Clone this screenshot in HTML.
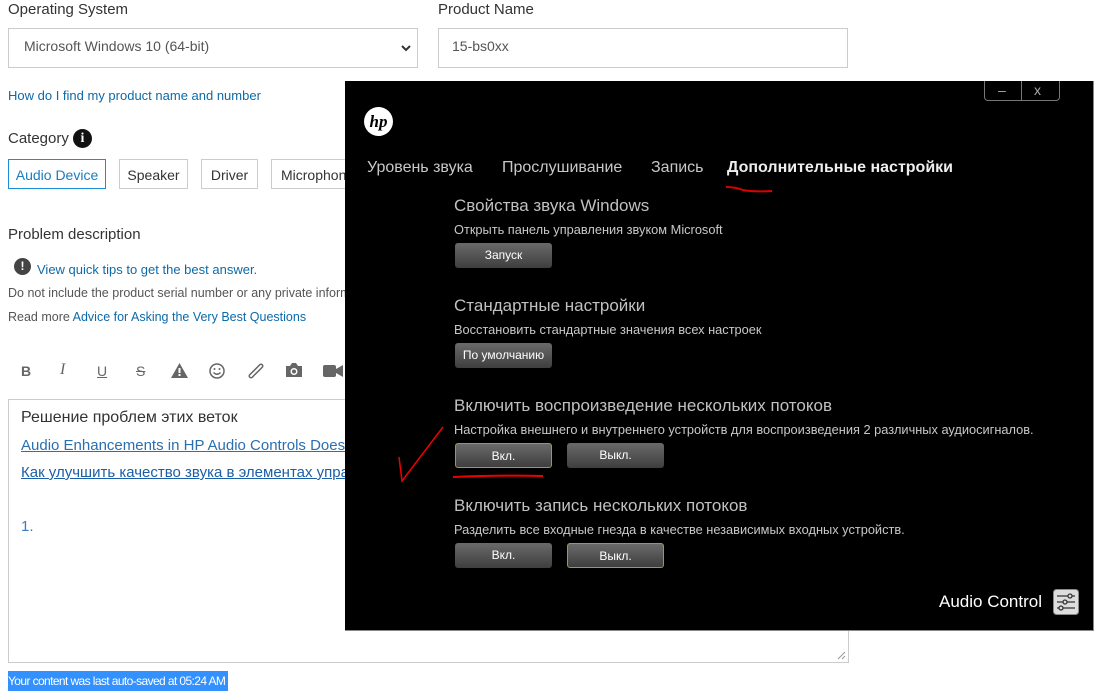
<!DOCTYPE html>
<html><head><meta charset="utf-8"><style>
body{margin:0;width:1103px;height:698px;background:#fff;position:relative;overflow:hidden;font-family:"Liberation Sans",sans-serif;}
.a{position:absolute;white-space:nowrap;}
.lbl{font-size:15px;color:#333;}
.box{position:absolute;border:1px solid #ccc;background:#fff;}
.chip{position:absolute;top:159px;height:30px;border:1px solid #ccc;font-size:14px;color:#333;line-height:30px;text-align:center;box-sizing:border-box;}
.link{color:#0c6aa8;}
.sm{font-size:12.5px;color:#555;}
.tb{position:absolute;top:363px;font-size:14px;color:#666;}
#win{position:absolute;left:345px;top:81px;width:748px;height:549px;background:#000;border-right:1px solid #888;border-bottom:1px solid #888;}
.w{position:absolute;white-space:nowrap;color:#c8c8c8;}
.h{font-size:17px;color:#c0c0c0;}
.d{font-size:12.8px;color:#c8c8c8;}
.btn{position:absolute;width:97px;height:25px;border-radius:3px;background:linear-gradient(#6a6a6a,#3e3e3e);color:#fff;font-size:12px;text-align:center;line-height:25px;box-sizing:border-box;}
.sel{border:1px solid #a09a3a;}
</style></head><body>
<div class="a lbl" style="left:8px;top:1px;">Operating System</div>
<div class="a lbl" style="left:438px;top:1px;">Product Name</div>
<div class="box" style="left:8px;top:28px;width:408px;height:38px;"></div>
<div class="a" style="left:24px;top:38px;font-size:14px;color:#555;">Microsoft Windows 10 (64-bit)</div>
<svg class="a" style="left:401px;top:44px" width="10" height="8"><path d="M1 2 L5 6 L9 2" stroke="#333" stroke-width="2" fill="none"/></svg>
<div class="box" style="left:438px;top:28px;width:408px;height:38px;"></div>
<div class="a" style="left:452px;top:38px;font-size:14px;color:#555;">15-bs0xx</div>
<div class="a link" style="left:8px;top:88px;font-size:13px;">How do I find my product name and number</div>
<div class="a lbl" style="left:8px;top:130px;">Category</div>
<div class="a" style="left:73px;top:129px;width:19px;height:19px;border-radius:50%;background:#111;color:#fff;font:bold 14px 'Liberation Serif',serif;text-align:center;line-height:19px;">i</div>
<div class="chip" style="left:8px;width:98px;border:1px solid #1a8fd8;color:#1a7cc0;">Audio Device</div>
<div class="chip" style="left:119px;width:69px;">Speaker</div>
<div class="chip" style="left:201px;width:57px;">Driver</div>
<div class="chip" style="left:271px;width:80px;text-align:left;padding-left:9px;">Microphone</div>
<div class="a lbl" style="left:8px;top:226px;">Problem description</div>
<div class="a" style="left:14px;top:258px;width:17px;height:17px;border-radius:50%;background:#444;color:#fff;font:bold 12px sans-serif;text-align:center;line-height:17px;">!</div>
<div class="a link" style="left:37px;top:262px;font-size:13px;">View quick tips to get the best answer.</div>
<div class="a sm" style="left:8px;top:286px;">Do not include the product serial number or any private information</div>
<div class="a sm" style="left:8px;top:310px;">Read more <span class="link">Advice for Asking the Very Best Questions</span></div>
<div class="tb" style="left:21px;font-weight:bold;">B</div>
<div class="tb" style="left:60px;font-style:italic;font-family:'Liberation Serif';font-size:16px;top:361px">I</div>
<div class="tb" style="left:97px;text-decoration:underline;">U</div>
<div class="tb" style="left:136px;text-decoration:line-through;">S</div>
<svg class="a" style="left:171px;top:363px" width="17" height="15"><path d="M8.5 0 L17 15 H0Z" fill="#666"/><rect x="7.5" y="5" width="2" height="5" fill="#fff"/><rect x="7.5" y="11" width="2" height="2" fill="#fff"/></svg>
<svg class="a" style="left:209px;top:363px" width="16" height="16"><circle cx="8" cy="8" r="7" stroke="#666" stroke-width="1.5" fill="none"/><circle cx="5.5" cy="6" r="1" fill="#666"/><circle cx="10.5" cy="6" r="1" fill="#666"/><path d="M4.5 9.5 Q8 13 11.5 9.5" stroke="#666" fill="none" stroke-width="1.3"/></svg>
<svg class="a" style="left:248px;top:363px" width="16" height="16"><path d="M3 13 L13 3" stroke="#666" stroke-width="5" stroke-linecap="round"/><path d="M3 13 L13 3" stroke="#fff" stroke-width="2" stroke-linecap="round"/></svg>
<svg class="a" style="left:285px;top:362px" width="18" height="16"><path d="M1 4 H5 L7 1 H11 L13 4 H17 V15 H1Z" fill="#666"/><circle cx="9" cy="9.5" r="3.5" fill="#fff"/><circle cx="9" cy="9.5" r="2" fill="#666"/></svg>
<svg class="a" style="left:323px;top:364px" width="20" height="14"><rect x="0" y="1" width="13" height="12" rx="2" fill="#666"/><path d="M13 5 L20 1 V13 L13 9Z" fill="#666"/></svg>
<div class="box" style="left:8px;top:399px;width:839px;height:262px;border-color:#ccc;"></div>
<svg class="a" style="left:836px;top:650px" width="10" height="10"><path d="M9 2 L2 9 M9 6 L6 9" stroke="#999"/></svg>
<div class="a" style="left:21px;top:409px;font-size:16px;color:#333;">Решение проблем этих веток</div>
<div class="a link" style="left:21px;top:437px;font-size:15px;text-decoration:underline;color:#2a6fb0;">Audio Enhancements in HP Audio Controls Does not work</div>
<div class="a link" style="left:21px;top:464px;font-size:15px;text-decoration:underline;color:#1a5fa8;">Как улучшить качество звука в элементах управления</div>
<div class="a" style="left:21px;top:518px;font-size:15px;color:#3a7cc0;">1.</div>
<div class="a" style="left:8px;top:671px;width:220px;height:20px;background:#3390ff;color:#fff;font-size:12px;line-height:20px;letter-spacing:-0.6px;">Your content was last auto-saved at 05:24 AM</div>

<div id="win">
 <div style="position:absolute;left:639px;top:0;width:74px;height:19px;border:1px solid #777;border-top:none;border-radius:0 0 4px 4px;"></div>
 <div style="position:absolute;left:676px;top:0;width:1px;height:19px;background:#777;"></div>
 <div class="w" style="left:653px;top:1px;color:#aaa;font-size:14px;">–</div>
 <div class="w" style="left:689px;top:1px;color:#aaa;font-size:14px;">x</div>
 <svg style="position:absolute;left:19px;top:26px" width="29" height="29"><circle cx="14.5" cy="14.5" r="14.5" fill="#fff"/><text x="14.5" y="20" font-family="Liberation Serif" font-style="italic" font-weight="bold" font-size="17" fill="#000" text-anchor="middle">hp</text></svg>
 <div class="w" style="left:22px;top:78px;font-size:16px;">Уровень звука</div>
 <div class="w" style="left:157px;top:78px;font-size:16px;">Прослушивание</div>
 <div class="w" style="left:306px;top:78px;font-size:16px;">Запись</div>
 <div class="w" style="left:382px;top:78px;font-size:16px;font-weight:bold;color:#eee;">Дополнительные настройки</div>
 <svg style="position:absolute;left:380px;top:102px" width="50" height="12"><path d="M1 4 Q10 4 18 7 Q28 9 47 8" stroke="#d00" stroke-width="2" fill="none"/></svg>
 <div class="w h" style="left:109px;top:115px;">Свойства звука Windows</div>
 <div class="w d" style="left:109px;top:141px;">Открыть панель управления звуком Microsoft</div>
 <div class="btn" style="left:110px;top:162px;">Запуск</div>
 <div class="w h" style="left:109px;top:215px;">Стандартные настройки</div>
 <div class="w d" style="left:109px;top:241px;">Восстановить стандартные значения всех настроек</div>
 <div class="btn" style="left:110px;top:262px;">По умолчанию</div>
 <div class="w h" style="left:109px;top:315px;">Включить воспроизведение нескольких потоков</div>
 <div class="w d" style="left:109px;top:341px;">Настройка внешнего и внутреннего устройств для воспроизведения 2 различных аудиосигналов.</div>
 <div class="btn sel" style="left:110px;top:362px;">Вкл.</div>
 <div class="btn" style="left:222px;top:362px;">Выкл.</div>
 <div class="w h" style="left:109px;top:415px;">Включить запись нескольких потоков</div>
 <div class="w d" style="left:109px;top:441px;">Разделить все входные гнезда в качестве независимых входных устройств.</div>
 <div class="btn" style="left:110px;top:462px;">Вкл.</div>
 <div class="btn sel" style="left:222px;top:462px;">Выкл.</div>
 <div class="w" style="left:594px;top:511px;font-size:17px;color:#fff;">Audio Control</div>
 <svg style="position:absolute;left:708px;top:508px" width="26" height="26"><rect x="0.5" y="0.5" width="25" height="25" rx="3" fill="#ddd" stroke="#888"/><g stroke="#333" stroke-width="1.3" fill="#ddd"><path d="M4 7H22M4 13H22M4 19H22"/><circle cx="17" cy="7" r="2"/><circle cx="12" cy="13" r="2"/><circle cx="8" cy="19" r="2"/></g></svg>
</div>
<svg style="position:absolute;left:0;top:0" width="1103" height="698"><path d="M399 457 L402 481 L443 427" stroke="#e00" stroke-width="1.5" fill="none"/><path d="M453 477 Q500 475 543 476" stroke="#e00" stroke-width="2" fill="none"/></svg>
</body></html>
